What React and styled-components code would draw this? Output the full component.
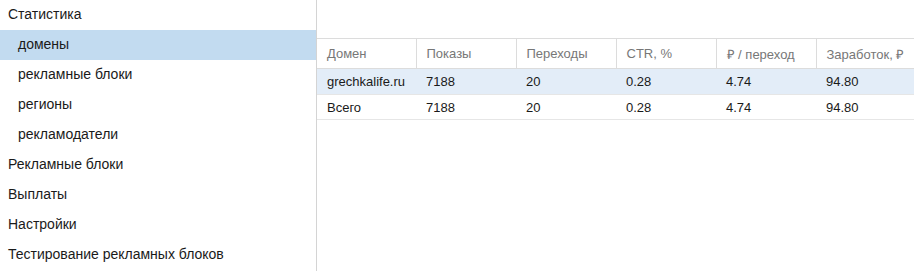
import React from 'react';
import styled, { createGlobalStyle } from 'styled-components';

const Global = createGlobalStyle`
  body {
    margin: 0;
    background: #fff;
    font-family: "Liberation Sans", Arial, sans-serif;
  }
`

const Layout = styled.div`
  display: flex;
  width: 914px;
  height: 271px;
  overflow: hidden;
`
const Sidebar = styled.nav`
  width: 316px;
  flex-shrink: 0;
  border-right: 1px solid #d4d4d4;
`
const MenuItem = styled.div`
  height: 30px;
  line-height: 29px;
  padding-left: ${p => (p.sub ? '18px' : '8px')};
  font-size: 14px;
  color: #1a1a1a;
  background: ${p => (p.active ? '#c2dbf0' : 'transparent')};
  white-space: nowrap;
`
const Content = styled.main`
  flex: 1;
  min-width: 0;
  padding-top: 38px;
`
const Table = styled.table`
  border-collapse: collapse;
  width: 100%;
  table-layout: fixed;
  font-size: 13px;
`
const Col = styled.col`
  width: ${p => p.w || 'auto'};
`
const Th = styled.th`
  box-sizing: border-box;
  height: 30px;
  text-align: left;
  font-weight: normal;
  color: #777;
  padding: 0 10px;
  border-top: 1px solid #dcdcdc;
  border-bottom: 1px solid #dcdcdc;
  border-left: 1px solid #dcdcdc;
  white-space: nowrap;
  overflow: hidden;
  &:first-child { border-left: none; }
`
const Tr = styled.tr`
  background: ${p => (p.hl ? '#e3edf8' : '#fff')};
`
const Td = styled.td`
  box-sizing: border-box;
  height: ${p => p.h || 25}px;
  padding: 0 10px;
  color: #1a1a1a;
  border-bottom: 1px solid #e6e6e6;
  white-space: nowrap;
  overflow: hidden;
`

const menu = [
  { t: 'Статистика' },
  { t: 'домены', sub: true, active: true },
  { t: 'рекламные блоки', sub: true },
  { t: 'регионы', sub: true },
  { t: 'рекламодатели', sub: true },
  { t: 'Рекламные блоки' },
  { t: 'Выплаты' },
  { t: 'Настройки' },
  { t: 'Тестирование рекламных блоков' },
];

const cols = ['Домен', 'Показы', 'Переходы', 'CTR, %', '₽ / переход', 'Заработок, ₽'];
const rows = [
  { cells: ['grechkalife.ru', '7188', '20', '0.28', '4.74', '94.80'], hl: true, h: 26 },
  { cells: ['Всего', '7188', '20', '0.28', '4.74', '94.80'], h: 25 },
];

export default function App() {
  return (
    <Layout>
      <Global />
      <Sidebar>
        {menu.map(m => (
          <MenuItem key={m.t} sub={m.sub} active={m.active}>{m.t}</MenuItem>
        ))}
      </Sidebar>
      <Content>
        <Table>
          <colgroup>
            <Col w="99px" />
            <Col w="100px" />
            <Col w="100px" />
            <Col w="100px" />
            <Col w="100px" />
            <Col />
          </colgroup>
          <thead>
            <tr>
              {cols.map(c => <Th key={c}>{c}</Th>)}
            </tr>
          </thead>
          <tbody>
            {rows.map((r, i) => (
              <Tr key={i} hl={r.hl}>
                {r.cells.map((c, j) => <Td key={j} h={r.h}>{c}</Td>)}
              </Tr>
            ))}
          </tbody>
        </Table>
      </Content>
    </Layout>
  );
}
